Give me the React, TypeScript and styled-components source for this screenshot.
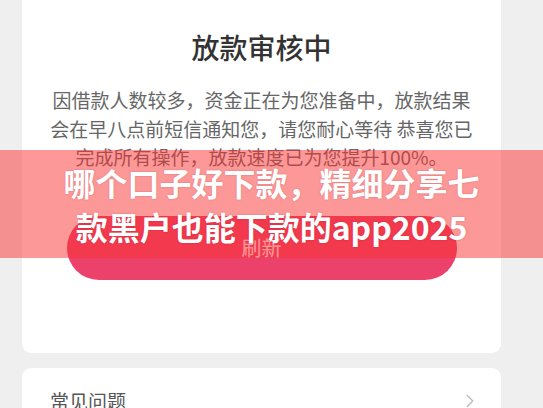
import React from 'react';
import styled, { createGlobalStyle } from 'styled-components';
import { ChevronRight } from 'lucide-react';

const GlobalStyle = createGlobalStyle`
  html, body {
    margin: 0;
    padding: 0;
    background: #efefef;
    font-family: "Noto Sans CJK SC", "Noto Sans", sans-serif;
    overflow: hidden;
  }
`;

const Page = styled.div`
  position: relative;
  display: flex;
  flex-flow: column nowrap;
  gap: 15px;
  padding: 0 42px 0 22px;
  width: 543px;
  height: 408px;
  box-sizing: border-box;
`;

const Card = styled.div`
  display: flex;
  flex-flow: column nowrap;
  align-items: center;
  background: #fff;
  border-radius: 0 0 9px 9px;
  padding: 27px 28px 73px;
`;

const Title = styled.h4`
  margin: 0;
  font-size: 28px;
  line-height: 40px;
  font-weight: 500;
  color: #333;
`;

const Notice = styled.p`
  margin: 19px 0 0;
  font-size: 19px;
  line-height: 28.5px;
  color: #666;
  text-align: center;
  white-space: pre-line;
`;

const RefreshButton = styled.button`
  margin-top: 44px;
  width: 390px;
  height: 64px;
  border: none;
  border-radius: 32px;
  background: #eb416a;
  color: #fff;
  font-family: inherit;
  font-size: 20px;
`;

const FaqCard = styled.div`
  display: flex;
  flex-flow: row nowrap;
  align-items: center;
  justify-content: space-between;
  background: #fff;
  border-radius: 9px 9px 0 0;
  padding: 20px 20px 20px 28px;
  font-size: 19px;
  line-height: 26px;
  color: #555;
`;

const Banner = styled.div`
  position: absolute;
  left: 0;
  right: 0;
  top: 150px;
  height: 108px;
  display: flex;
  align-items: center;
  justify-content: center;
  background: rgba(250, 50, 50, 0.5);
`;

const BannerText = styled.div`
  color: #fff;
  font-size: 32px;
  line-height: 44px;
  font-weight: 700;
  text-align: center;
  white-space: pre-line;
  text-shadow: 0 0 2px rgba(120, 0, 0, 0.25);
`;

export default function App() {
  return (
    <>
      <GlobalStyle />
      <Page>
        <Card>
          <Title>放款审核中</Title>
          <Notice>
            {'因借款人数较多，资金正在为您准备中，放款结果\n会在早八点前短信通知您，请您耐心等待 恭喜您已\n完成所有操作，放款速度已为您提升100%。'}
          </Notice>
          <RefreshButton>刷新</RefreshButton>
        </Card>
        <FaqCard>
          <span>常见问题</span>
          <ChevronRight size={22} color="#bbb" strokeWidth={1.5} />
        </FaqCard>
        <Banner>
          <BannerText>{'哪个口子好下款，精细分享七\n款黑户也能下款的app2025'}</BannerText>
        </Banner>
      </Page>
    </>
  );
}
